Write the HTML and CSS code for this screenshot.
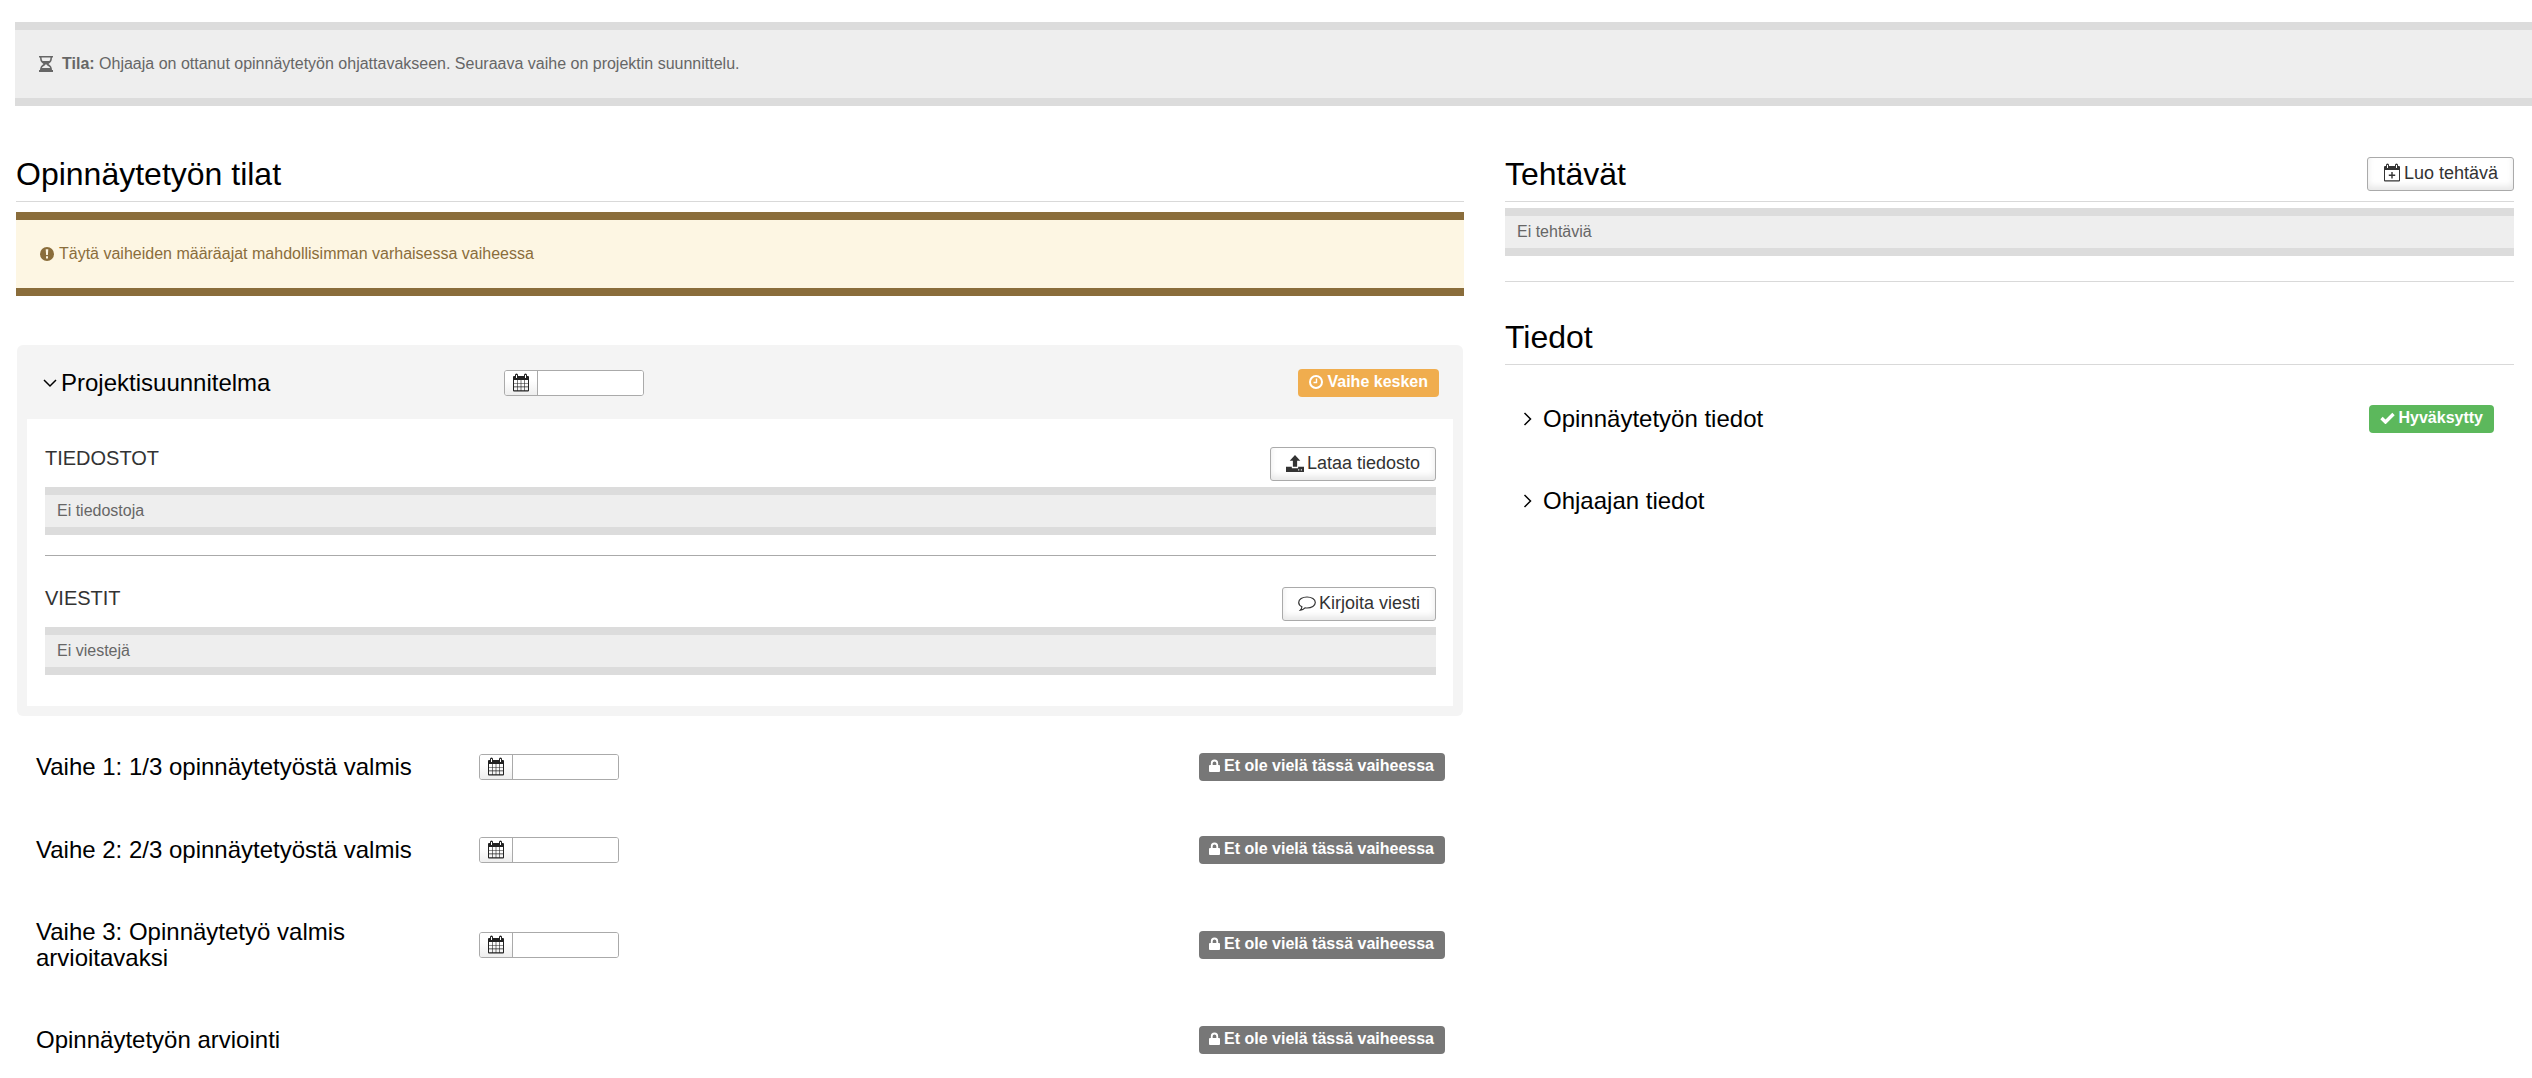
FILE: index.html
```
<!DOCTYPE html>
<html lang="fi">
<head>
<meta charset="utf-8">
<title>Opinnäytetyön tilat</title>
<link rel="stylesheet" href="styles.css">
</head>
<body>
<svg class="sprite" aria-hidden="true">
  <symbol id="i-calendar" viewBox="0 0 18 20"><path fill="currentColor" d="M2 3h1v-1q0-1.500 1.500-1.500t1.500 1.500v1h6v-1q0-1.500 1.500-1.500t1.500 1.500v1h1q1 0 1 1v13.500q0 1-1 1h-14q-1 0-1-1v-13.500q0-1 1-1zM4 2v3h1v-3zM13 2v3h1v-3zM2 7v3h3v-3zM5.600 7v3h3.100v-3zM9.300 7v3h3.100v-3zM13 7v3h3v-3zM2 10.600v3h3v-3zM5.600 10.600v3h3.100v-3zM9.300 10.600v3h3.100v-3zM13 10.600v3h3v-3zM2 14.200v3h3v-3zM5.600 14.200v3h3.100v-3zM9.300 14.200v3h3.100v-3zM13 14.200v3h3v-3z" fill-rule="evenodd"/></symbol>
  <symbol id="i-calendar-plus" viewBox="0 0 18 20"><path fill="currentColor" fill-rule="evenodd" d="M2 3h1v-1q0-1.500 1.500-1.500t1.500 1.500v1h6v-1q0-1.500 1.500-1.500t1.500 1.500v1h1q1 0 1 1v13.500q0 1-1 1h-14q-1 0-1-1v-13.500q0-1 1-1zM4 2v3h1v-3zM13 2v3h1v-3zM2 7v10.300h14v-10.300zM8.300 9h1.400v2.500h2.500v1.400h-2.500v2.500h-1.400v-2.500h-2.500v-1.400h2.500z"/></symbol>
  <symbol id="i-lock" viewBox="0 0 12 14"><path fill="currentColor" fill-rule="evenodd" d="M1 6h1v-2q0-4 4-4t4 4v2h1q1 0 1 1v5.500q0 1-1 1h-10q-1 0-1-1v-5.500q0-1 1-1zM4 6h4v-2q0-2-2-2t-2 2z"/></symbol>
</svg>

<main class="page">
  <div class="alert alert-status">
    <svg class="icon-hourglass" viewBox="0 0 14 16" aria-hidden="true"><path fill="currentColor" fill-rule="evenodd" d="M0 0h14v1.500h-1q0 4.500-3.500 6.500q3.500 2 3.500 6h1v2h-14v-2h1q0-4 3.500-6q-3.500-2-3.500-6.500h-1zM2.500 1.500q.1 2 1 3.500h7q.9-1.500 1-3.500zM6.300 8.500q-.3 1-1.800 1.800q-1.300.8-1.600 1.700h8.200q-.3-.9-1.600-1.700q-1.500-.8-1.800-1.800z"/></svg>
    <p><strong>Tila:</strong> Ohjaaja on ottanut opinnäytetyön ohjattavakseen. Seuraava vaihe on projektin suunnittelu.</p>
  </div>

  <div class="columns">
    <section>
      <header class="section-head"><h2>Opinnäytetyön tilat</h2></header>
      <div class="alert alert-warning">
        <svg class="icon-warn" viewBox="0 0 14 14" aria-hidden="true"><circle cx="7" cy="7" r="7" fill="currentColor"/><path class="mark" d="M5.700 2.300h2.600l-.4 5.700h-1.800zM6 9.300h2v2.200h-2z"/></svg>
        <p>Täytä vaiheiden määräajat mahdollisimman varhaisessa vaiheessa</p>
      </div>

      <article class="panel">
        <div class="phase phase-open">
          <h3><svg class="chevron-down" viewBox="0 0 14 10" aria-hidden="true"><path d="M1 2l6 6 6-6"/></svg>Projektisuunnitelma</h3>
          <div class="date"><button type="button" aria-label="Valitse päivä"><svg><use href="#i-calendar"/></svg></button><input type="text" aria-label="Projektisuunnitelma, määräaika"></div>
          <span class="badge badge-orange"><svg class="icon-clock" viewBox="0 0 14 14" aria-hidden="true"><circle cx="7" cy="7" r="6"/><path d="M7.500 3.500v4h-3"/></svg>Vaihe kesken</span>
        </div>
        <div class="panel-body">
          <div class="block-head">
            <h4>TIEDOSTOT</h4>
            <button type="button" class="btn"><svg class="icon-button" viewBox="0 0 17 16" aria-hidden="true"><path fill="currentColor" fill-rule="evenodd" d="M8.500 0l5 5.500h-3v5.500h-4v-5.500h-3zM0 11h5.500v1.500h6v-1.500h5.500v5h-17zM11.500 13.500v1h1v-1zM14 13.500v1h1v-1z"/></svg>Lataa tiedosto</button>
          </div>
          <div class="alert alert-small"><p>Ei tiedostoja</p></div>
          <hr class="dark">
          <div class="block-head">
            <h4>VIESTIT</h4>
            <button type="button" class="btn"><svg class="icon-button" viewBox="0 0 18 16" aria-hidden="true"><path class="bubble" d="M9 1.500c4.600 0 8.300 2.400 8.300 5.500s-3.700 5.500-8.300 5.500q-1 0-2-.2q-2 2-4.600 2.300q1.300-1.300 1.500-3.300q-3.200-1.600-3.200-4.300c0-3.100 3.700-5.500 8.300-5.500z"/></svg>Kirjoita viesti</button>
          </div>
          <div class="alert alert-small"><p>Ei viestejä</p></div>
        </div>
      </article>

      <div class="phases">
        <div class="phase">
          <h3>Vaihe 1: 1/3 opinnäytetyöstä valmis</h3>
          <div class="date"><button type="button" aria-label="Valitse päivä"><svg><use href="#i-calendar"/></svg></button><input type="text" aria-label="Vaihe 1, määräaika"></div>
          <span class="badge badge-gray"><svg class="icon-lock"><use href="#i-lock"/></svg>Et ole vielä tässä vaiheessa</span>
        </div>
        <div class="phase">
          <h3>Vaihe 2: 2/3 opinnäytetyöstä valmis</h3>
          <div class="date"><button type="button" aria-label="Valitse päivä"><svg><use href="#i-calendar"/></svg></button><input type="text" aria-label="Vaihe 2, määräaika"></div>
          <span class="badge badge-gray"><svg class="icon-lock"><use href="#i-lock"/></svg>Et ole vielä tässä vaiheessa</span>
        </div>
        <div class="phase">
          <h3>Vaihe 3: Opinnäytetyö valmis arvioitavaksi</h3>
          <div class="date"><button type="button" aria-label="Valitse päivä"><svg><use href="#i-calendar"/></svg></button><input type="text" aria-label="Vaihe 3, määräaika"></div>
          <span class="badge badge-gray"><svg class="icon-lock"><use href="#i-lock"/></svg>Et ole vielä tässä vaiheessa</span>
        </div>
        <div class="phase">
          <h3>Opinnäytetyön arviointi</h3>
          <span class="badge badge-gray"><svg class="icon-lock"><use href="#i-lock"/></svg>Et ole vielä tässä vaiheessa</span>
        </div>
      </div>
    </section>

    <aside>
      <header class="section-head">
        <h2>Tehtävät</h2>
        <button type="button" class="btn"><svg class="icon-button icon-tall"><use href="#i-calendar-plus"/></svg>Luo tehtävä</button>
      </header>
      <div class="alert alert-small alert-tasks"><p>Ei tehtäviä</p></div>
      <hr>
      <header class="section-head section-info"><h2>Tiedot</h2></header>
      <div class="info-rows">
        <div class="info-row">
          <svg class="chevron-right" viewBox="0 0 10 14" aria-hidden="true"><path d="M1.500 1l6 6-6 6"/></svg>
          <h3>Opinnäytetyön tiedot</h3>
          <span class="badge badge-green"><svg class="icon-check" viewBox="0 0 15 12" aria-hidden="true"><path d="M1.500 6l4 4 8-8"/></svg>Hyväksytty</span>
        </div>
        <div class="info-row">
          <svg class="chevron-right" viewBox="0 0 10 14" aria-hidden="true"><path d="M1.500 1l6 6-6 6"/></svg>
          <h3>Ohjaajan tiedot</h3>
        </div>
      </div>
    </aside>
  </div>
</main>
</body>
</html>
```
FILE: styles.css
```
* { box-sizing: border-box; }
body {
  margin: 0;
  background: #fff;
  color: #333;
  font: 16px/24px "Liberation Sans", Arial, sans-serif;
}
h2, h3, h4, p { margin: 0; font-weight: 400; }
h2 { font-size: 32px; line-height: 36px; color: #000; }
h3 { font-size: 24px; line-height: 26px; color: #000; }
h4 { font-size: 20px; line-height: 22px; }
svg { flex: none; }
button, input { font: inherit; }
.sprite { display: none; }

.page { min-height: 100vh; padding-top: 22px; overflow: hidden; }

.alert {
  display: flex;
  align-items: center;
  padding: 22px 24px;
  border: solid #dcdcdc;
  border-width: 8px 0;
  background: #eee;
  color: #666;
}
.alert-status { margin-left: 15px; gap: 9px; }
.alert-warning {
  margin-top: 10px;
  gap: 5px;
  border-color: #8a6d3b;
  background: #fdf6e3;
  color: #8a6d3b;
}
.alert-small { padding: 4px 12px; }
.alert-tasks { margin-top: 6px; }
.icon-hourglass { width: 14px; height: 16px; }
.icon-warn { width: 14px; height: 14px; }
.mark { fill: #fdf6e3; }

.columns {
  display: grid;
  grid-template-columns: minmax(0, 1448fr) minmax(0, 1009fr);
  gap: 41px;
  padding: 48px 18px 0 16px;
}
.section-head {
  display: flex;
  align-items: center;
  justify-content: space-between;
  height: 48px;
  padding-bottom: 8px;
  border-bottom: 1px solid #d9d9d9;
}
hr { height: 1px; margin: 25px 0 0; border: 0; background: #d9d9d9; }
hr.dark { margin: 20px 0 31px; background: #aaa; }

.btn {
  display: flex;
  align-items: center;
  gap: 3px;
  height: 34px;
  padding: 0 15px 2px;
  border: 1px solid #aaa;
  border-radius: 3px;
  background: #fff;
  box-shadow: inset 0 -4px 6px #e8e8e8;
  color: #333;
  font-size: 18px;
  line-height: 24px;
}
.icon-button { width: 18px; height: 17px; }
.icon-tall { height: 20px; }
.bubble { fill: none; stroke: currentColor; stroke-width: 1.2; }

.panel {
  margin: 49px 1px 0;
  padding: 0 10px 10px;
  border-radius: 6px;
  background: #f4f4f4;
}
.phase {
  display: grid;
  grid-template-columns: 430px 140px minmax(0, 1fr);
  column-gap: 13px;
  align-items: center;
}
.phase > .badge { grid-column: 3; justify-self: end; }
.phase-open { height: 74px; padding: 2px 14px 0 16px; grid-template-columns: 448px 140px minmax(0, 1fr); }
.phase-open h3 { display: flex; align-items: center; gap: 4px; }
.chevron-down { width: 14px; height: 10px; }
.chevron-right { width: 10px; height: 14px; }
.chevron-down path, .chevron-right path { fill: none; stroke: #000; stroke-width: 1.5; }

.panel-body { padding: 28px 17px 31px 18px; background: #fff; }
.block-head {
  display: flex;
  justify-content: space-between;
  margin-bottom: 6px;
}

.date {
  display: flex;
  width: 140px;
  height: 26px;
  border: 1px solid #aaa;
  border-radius: 3px;
  background: #fff;
  overflow: hidden;
}
.date button {
  display: grid;
  place-items: center;
  width: 33px;
  padding: 0;
  border: 0;
  border-right: 1px solid #aaa;
  background: linear-gradient(#fff 40%, #eee);
  color: #222;
}
.date svg { width: 18px; height: 20px; }
.date input { flex: 1; min-width: 0; border: 0; padding: 0 8px; }

.badge {
  display: flex;
  align-items: center;
  gap: 4px;
  height: 28px;
  padding: 0 11px 2px 10px;
  border-radius: 4px;
  color: #fff;
  font-weight: 700;
  line-height: 20px;
  white-space: nowrap;
}
.badge-orange, .badge-green { padding-left: 11px; }
.badge-orange { background: #f0ad4e; }
.badge-green { background: #5cb85c; margin-left: auto; }
.badge-gray { background: #777; }
.icon-clock { width: 14px; height: 14px; fill: none; stroke: #fff; stroke-width: 2; }
.icon-clock path { stroke-width: 1.4; }
.icon-check { width: 15px; height: 12px; fill: none; stroke: #fff; stroke-width: 3.4; }
.icon-lock { width: 11px; height: 14px; }

.phases { display: grid; gap: 55px; padding: 37px 19px 24px 20px; }

.section-info { margin-top: 35px; }
.info-rows { display: grid; gap: 54px; padding: 40px 20px 0 18px; }
.info-row { display: flex; align-items: center; gap: 10px; height: 28px; }
```
